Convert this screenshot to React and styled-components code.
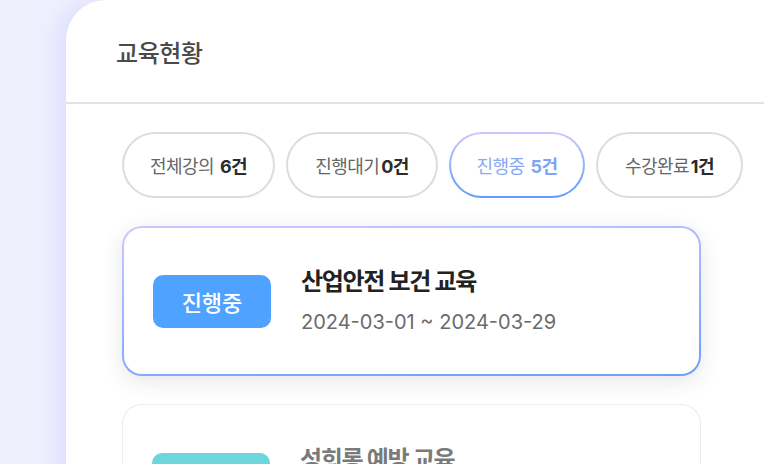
import React from "react";
import styled, { createGlobalStyle } from "styled-components";

const GlobalStyle = createGlobalStyle`
	html, body {
		margin: 0;
		padding: 0;
		background: #eff0fe;
		overflow: hidden;
		font-family: Inter, "Noto Sans CJK KR", sans-serif;
	}
`;

const Page = styled.div`
	width: 768px;
	height: 464px;
	overflow: hidden;
	background: #eff0fe;
	padding-left: 66px;
	box-sizing: border-box;
`;

const Panel = styled.section`
	background: #ffffff;
	border-top-left-radius: 40px;
	min-height: 600px;
	box-shadow: -8px 0 24px rgba(190, 185, 255, 0.35);
`;

const Header = styled.header`
	height: 102px;
	display: flex;
	align-items: center;
	padding-left: 50px;
	border-bottom: 2px solid #e3e3e6;
	margin-right: 4px;
`;

const Title = styled.h2`
	margin: 0;
	font-size: 24px;
	font-weight: 500;
	color: #4a4a4a;
	letter-spacing: -0.4px;
`;

const Body = styled.div`
	padding: 28px 0 0 56px;
	display: flex;
	flex-direction: column;
	gap: 28px;
`;

const Filters = styled.div`
	display: flex;
	gap: 11px;
`;

const Pill = styled.button`
	width: ${p => p.$w}px;
	height: 66px;
	padding: 0;
	border-radius: 33px;
	border: 2px solid transparent;
	background: ${p =>
		p.$active
			? "linear-gradient(#fff, #fff) padding-box, linear-gradient(180deg, #cdc6ff, #5f9bff) border-box"
			: "linear-gradient(#fff, #fff) padding-box, linear-gradient(#dcdcdc, #dcdcdc) border-box"};
	font-family: inherit;
	font-size: 18px;
	letter-spacing: -0.6px;
	white-space: nowrap;
	color: ${p => (p.$active ? "#86a9f6" : "#666")};
	display: flex;
	align-items: center;
	justify-content: center;
	gap: ${p => p.$gap}px;
	cursor: pointer;
	b {
		font-weight: 700;
		color: ${p => (p.$active ? "#7ea4f5" : "#2b2b2b")};
	}
`;

const Card = styled.div`
	width: 579px;
	height: 150px;
	box-sizing: border-box;
	border-radius: 20px;
	display: flex;
	align-items: center;
	padding-left: 29px;
	gap: 30px;
	border: ${p => (p.$active ? "2px" : "1.5px")} solid transparent;
	background: ${p =>
		p.$active
			? "linear-gradient(#fff, #fff) padding-box, linear-gradient(175deg, #cdc8ff, #6b9eff) border-box"
			: "linear-gradient(#fff, #fff) padding-box, linear-gradient(#ececec, #ececec) border-box"};
	box-shadow: ${p => (p.$active ? "0 5px 22px rgba(0, 0, 0, 0.1)" : "none")};
`;

const Badge = styled.span`
	width: 118px;
	height: 53px;
	border-radius: 10px;
	background: ${p => p.$color};
	color: #fff;
	font-size: 22px;
	font-weight: 500;
	display: flex;
	align-items: center;
	justify-content: center;
	flex-shrink: 0;
`;

const Info = styled.div`
	display: flex;
	flex-direction: column;
	gap: 10px;
`;

const CourseName = styled.div`
	font-size: 24px;
	font-weight: 700;
	letter-spacing: -1.3px;
	color: ${p => (p.$muted ? "#7a7a7a" : "#222")};
	line-height: 32px;
	white-space: nowrap;
`;

const Dates = styled.div`
	font-size: 20px;
	color: #6b6b6b;
	letter-spacing: 0;
	line-height: 28px;
	white-space: nowrap;
`;

const filters = [
	{ label: "전체강의", count: "6건", w: 153, gap: 6 },
	{ label: "진행대기", count: "0건", w: 152, gap: 2 },
	{ label: "진행중", count: "5건", w: 136, gap: 6, active: true },
	{ label: "수강완료", count: "1건", w: 147, gap: 2 },
];

const courses = [
	{ name: "산업안전 보건 교육", dates: "2024-03-01 ~ 2024-03-29", status: "진행중", color: "#4fa2ff", active: true },
	{ name: "성희롱 예방 교육", dates: "2024-03-01 ~ 2024-03-29", status: "진행중", color: "#6dd6dc", muted: true },
];

export default function App() {
	return (
		<Page>
			<GlobalStyle />
			<Panel>
				<Header>
					<Title>교육현황</Title>
				</Header>
				<Body>
					<Filters>
						{filters.map(f => (
							<Pill key={f.label} $active={f.active} $w={f.w} $gap={f.gap}>
								{f.label}
								<b>{f.count}</b>
							</Pill>
						))}
					</Filters>
					{courses.map(c => (
						<Card key={c.name} $active={c.active}>
							<Badge $color={c.color}>{c.status}</Badge>
							<Info>
								<CourseName $muted={c.muted}>{c.name}</CourseName>
								<Dates>{c.dates}</Dates>
							</Info>
						</Card>
					))}
				</Body>
			</Panel>
		</Page>
	);
}
